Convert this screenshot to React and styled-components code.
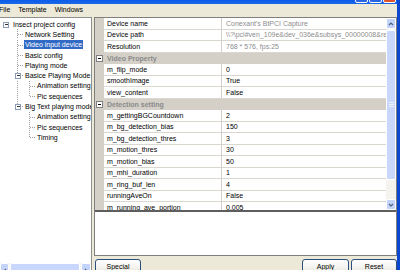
import React from 'react';
import styled, { createGlobalStyle } from 'styled-components';

const Global = createGlobalStyle`
  html, body { margin: 0; padding: 0; overflow: hidden; background: #ECE9D8; }
  body { font-family: "Liberation Sans", Arial, sans-serif; font-size: 7px; color: #000; }
  #root { width: 400px; height: 270px; overflow: hidden; }
`;

const Window = styled.div`
  width: 400px;
  height: 280px;
  box-sizing: border-box;
  display: flex;
  flex-direction: column;
  background: #ECE9D8;
  border-right: 3px solid #0B47CF;
  overflow: hidden;
`;

const TitleBar = styled.div`
  height: 4px;
  flex: 0 0 4px;
  background: linear-gradient(#0A5DE8, #1C68E8);
  display: flex;
  justify-content: flex-end;
  align-items: flex-end;
  gap: 1px;
  padding-right: 1px;
  overflow: hidden;
`;

const CapButton = styled.div`
  width: 13px;
  height: 14px;
  flex: 0 0 13px;
  margin-bottom: 1px;
  box-sizing: border-box;
  border: 1px solid #fff;
  border-radius: 2px;
  background: ${p => (p.$close ? '#E0532D' : '#2A66E2')};
`;

const MenuBar = styled.div`
  height: 12px;
  flex: 0 0 12px;
  display: flex;
  align-items: center;
  margin-left: -5px;
`;

const MenuItem = styled.span`
  padding: 0 4px;
  line-height: 12px;
  white-space: nowrap;
`;

const Body = styled.div`
  flex: 1;
  display: flex;
  gap: 2px;
  padding-top: 1px;
  min-height: 0;
`;

const TreePanel = styled.div`
  width: 92px;
  flex: 0 0 92px;
  box-sizing: border-box;
  background: #fff;
  border: 1px solid #8E8F8F;
  border-left: none;
  display: flex;
  flex-direction: column;
`;

const TreeList = styled.div`
  flex: 1;
  padding-top: 1px;
  overflow: hidden;
`;

const TreeRow = styled.div`
  height: 10.3px;
  display: flex;
  align-items: center;
  white-space: nowrap;
`;

const TreeLabel = styled.span`
  margin-left: 1px;
  padding: 0 1px;
  line-height: 9px;
  height: 9px;
  background: ${p => (p.$selected ? '#316AC5' : 'transparent')};
  color: ${p => (p.$selected ? '#fff' : '#000')};
`;

const HScroll = styled.div`
  height: 16px;
  flex: 0 0 16px;
  display: flex;
  background: #F4F3EE;
`;

const ScrollBtn = styled.div`
  width: ${p => p.$w || 10}px;
  height: ${p => p.$h || 10}px;
  flex: 0 0 auto;
  box-sizing: border-box;
  border: 1px solid #fff;
  border-radius: 2px;
  background: #C3D3FA;
  display: flex;
  align-items: center;
  justify-content: center;
`;

const HThumb = styled.div`
  flex: 1;
  margin: 0 1px;
  box-sizing: border-box;
  border: 1px solid #fff;
  border-radius: 2px;
  background: #C8D7FB;
`;

const RightCol = styled.div`
  flex: 1;
  display: flex;
  flex-direction: column;
  min-width: 0;
`;

const Outer = styled.div`
  height: 239px;
  flex: 0 0 239px;
  box-sizing: border-box;
  border: 1px solid #7F7F7F;
  background: #fff;
  display: flex;
  flex-direction: column;
`;

const GridFrame = styled.div`
  height: 194px;
  flex: 0 0 194px;
  box-sizing: border-box;
  border-bottom: 2px solid #5E5E5E;
  display: flex;
`;

const Table = styled.div`
  flex: 1;
  overflow: hidden;
  min-width: 0;
`;

const PropRow = styled.div`
  display: grid;
  grid-template-columns: 9px 118px 1fr;
  height: 11.5px;
`;

const Gutter = styled.div`
  background: #D4D0C8;
  display: flex;
  align-items: center;
  justify-content: center;
`;

const Cell = styled.div`
  box-sizing: border-box;
  border-bottom: 1px solid #D9D7D0;
  border-right: ${p => (p.$name ? '1px solid #D4D0C8' : 'none')};
  padding-left: ${p => (p.$name ? 3 : 4)}px;
  display: flex;
  align-items: center;
  white-space: nowrap;
  overflow: hidden;
  color: ${p => (p.$readonly ? '#8D8D8D' : '#000')};
`;

const CatCell = styled.div`
  grid-column: span 2;
  background: #D4D0C8;
  color: #8A8A8A;
  font-weight: bold;
  padding-left: 3px;
  display: flex;
  align-items: center;
  white-space: nowrap;
`;

const VScroll = styled.div`
  width: 10px;
  flex: 0 0 10px;
  display: flex;
  flex-direction: column;
  background: #F4F3EE;
`;

const VTrack = styled.div`
  flex: 1;
  padding: 1px 0;
  display: flex;
  flex-direction: column;
`;

const VThumb = styled.div`
  height: 150px;
  flex: 0 0 150px;
  box-sizing: border-box;
  border: 1px solid #fff;
  border-radius: 2px;
  background: #C8D7FB;
  display: flex;
  align-items: center;
  justify-content: center;
`;

const ButtonRow = styled.div`
  flex: 1;
  display: flex;
  justify-content: space-between;
  align-items: flex-start;
  padding: 3px 0 0 1px;
`;

const ButtonGroup = styled.div`
  display: flex;
  gap: 2px;
`;

const Button = styled.button`
  width: ${p => p.$w}px;
  height: 15px;
  box-sizing: border-box;
  padding: 0;
  border: 1px solid #2B4F7E;
  border-radius: 3px;
  background: linear-gradient(#FFFFFF, #F3F2EE 60%, #E2DFD6);
  font-family: "Liberation Sans", Arial, sans-serif;
  font-size: 7px;
  color: #000;
`;

const treeItems = [
  { label: 'Insect project config', level: 0, box: true },
  { label: 'Network Setting', level: 1 },
  { label: 'Video input device', level: 1, selected: true },
  { label: 'Basic config', level: 1 },
  { label: 'Playing mode', level: 1 },
  { label: 'Basice Playing Mode', level: 1, box: true },
  { label: 'Animation setting', level: 2, cont: [1] },
  { label: 'Pic sequences', level: 2, last: true, cont: [1] },
  { label: 'Big Text playing mode', level: 1, box: true, last: true },
  { label: 'Animation setting', level: 2 },
  { label: 'Pic sequences', level: 2 },
  { label: 'Timing', level: 2, last: true },
];

const LINE = '#A0A0A0';

function Guides({ level, box, last, cont = [] }) {
  const h = 10.3;
  const mid = 5.5;
  const w = 12 * level + 11;
  const cx = 12 * level + 5.5;
  return (
    <svg width={w} height={h} style={{ flex: '0 0 auto' }} shapeRendering="crispEdges">
      {cont.map(a => (
        <line key={a} x1={12 * a + 5.5} y1={0} x2={12 * a + 5.5} y2={h} stroke={LINE} strokeDasharray="1 1" />
      ))}
      {level > 0 && (
        <>
          <line x1={cx} y1={0} x2={cx} y2={last ? mid : h} stroke={LINE} strokeDasharray="1 1" />
          <line x1={cx} y1={mid} x2={cx + 5} y2={mid} stroke={LINE} strokeDasharray="1 1" />
        </>
      )}
      {box && (
        <>
          <rect x={cx - 2} y={mid - 2.5} width={5} height={5} fill="#fff" stroke="#8C9DB5" />
          <line x1={cx - 1} y1={mid} x2={cx + 2} y2={mid} stroke="#333" />
        </>
      )}
    </svg>
  );
}

const props = [
  { name: 'Device name', value: "Conexant's BtPCI Capture", ro: true },
  { name: 'Device path', value: String.raw`\\?\pci#ven_109e&dev_036e&subsys_00000008&rev_11`, ro: true },
  { name: 'Resolution', value: '768 * 576, fps:25', ro: true },
  { cat: 'Video Property' },
  { name: 'm_flip_mode', value: '0' },
  { name: 'smoothImage', value: 'True' },
  { name: 'view_content', value: 'False' },
  { cat: 'Detection setting' },
  { name: 'm_gettingBGCountdown', value: '2' },
  { name: 'm_bg_detection_bias', value: '150' },
  { name: 'm_bg_detection_thres', value: '3' },
  { name: 'm_motion_thres', value: '30' },
  { name: 'm_motion_bias', value: '50' },
  { name: 'm_mhi_duration', value: '1' },
  { name: 'm_ring_buf_len', value: '4' },
  { name: 'runningAveOn', value: 'False' },
  { name: 'm_running_ave_portion', value: '0.005' },
];

const MinusBox = () => (
  <svg width="7" height="7" shapeRendering="crispEdges">
    <rect x="0.5" y="0.5" width="6" height="6" fill="#fff" stroke="#808080" />
    <line x1="2" y1="3.5" x2="5" y2="3.5" stroke="#000" />
  </svg>
);

const Chevron = ({ dir }) => {
  const pts = {
    up: '2,5 4,3 6,5',
    down: '2,3 4,5 6,3',
    left: '5,2 3,4 5,6',
    right: '3,2 5,4 3,6',
  }[dir];
  return (
    <svg width="8" height="8">
      <polyline points={pts} fill="none" stroke="#4D6185" strokeWidth="1.2" />
    </svg>
  );
};

const Grip = () => (
  <svg width="5" height="6" shapeRendering="crispEdges">
    {[0.5, 2.5, 4.5].map(y => (
      <line key={y} x1="0" y1={y} x2="5" y2={y} stroke="#EEF3FE" />
    ))}
  </svg>
);

export default function App() {
  return (
    <>
      <Global />
      <Window>
        <TitleBar>
          <CapButton />
          <CapButton />
          <CapButton $close />
        </TitleBar>
        <MenuBar>
          <MenuItem>File</MenuItem>
          <MenuItem>Template</MenuItem>
          <MenuItem>Windows</MenuItem>
        </MenuBar>
        <Body>
          <TreePanel>
            <TreeList>
              {treeItems.map((it, i) => (
                <TreeRow key={i}>
                  <Guides level={it.level} box={it.box} last={it.last} cont={it.cont} />
                  <TreeLabel $selected={it.selected}>{it.label}</TreeLabel>
                </TreeRow>
              ))}
            </TreeList>
            <HScroll>
              <ScrollBtn $w={9} $h={16}><Chevron dir="left" /></ScrollBtn>
              <HThumb />
              <ScrollBtn $w={10} $h={16}><Chevron dir="right" /></ScrollBtn>
            </HScroll>
          </TreePanel>
          <RightCol>
            <Outer>
              <GridFrame>
                <Table>
                  {props.map((p, i) =>
                    p.cat ? (
                      <PropRow key={i}>
                        <Gutter><MinusBox /></Gutter>
                        <CatCell>{p.cat}</CatCell>
                      </PropRow>
                    ) : (
                      <PropRow key={i}>
                        <Gutter />
                        <Cell $name>{p.name}</Cell>
                        <Cell $readonly={p.ro}>{p.value}</Cell>
                      </PropRow>
                    )
                  )}
                </Table>
                <VScroll>
                  <ScrollBtn $w={10} $h={11}><Chevron dir="up" /></ScrollBtn>
                  <VTrack>
                    <VThumb><Grip /></VThumb>
                  </VTrack>
                  <ScrollBtn $w={10} $h={11}><Chevron dir="down" /></ScrollBtn>
                </VScroll>
              </GridFrame>
            </Outer>
            <ButtonRow>
              <Button $w={46}>Special</Button>
              <ButtonGroup>
                <Button $w={47}>Apply</Button>
                <Button $w={46}>Reset</Button>
              </ButtonGroup>
            </ButtonRow>
          </RightCol>
        </Body>
      </Window>
    </>
  );
}
